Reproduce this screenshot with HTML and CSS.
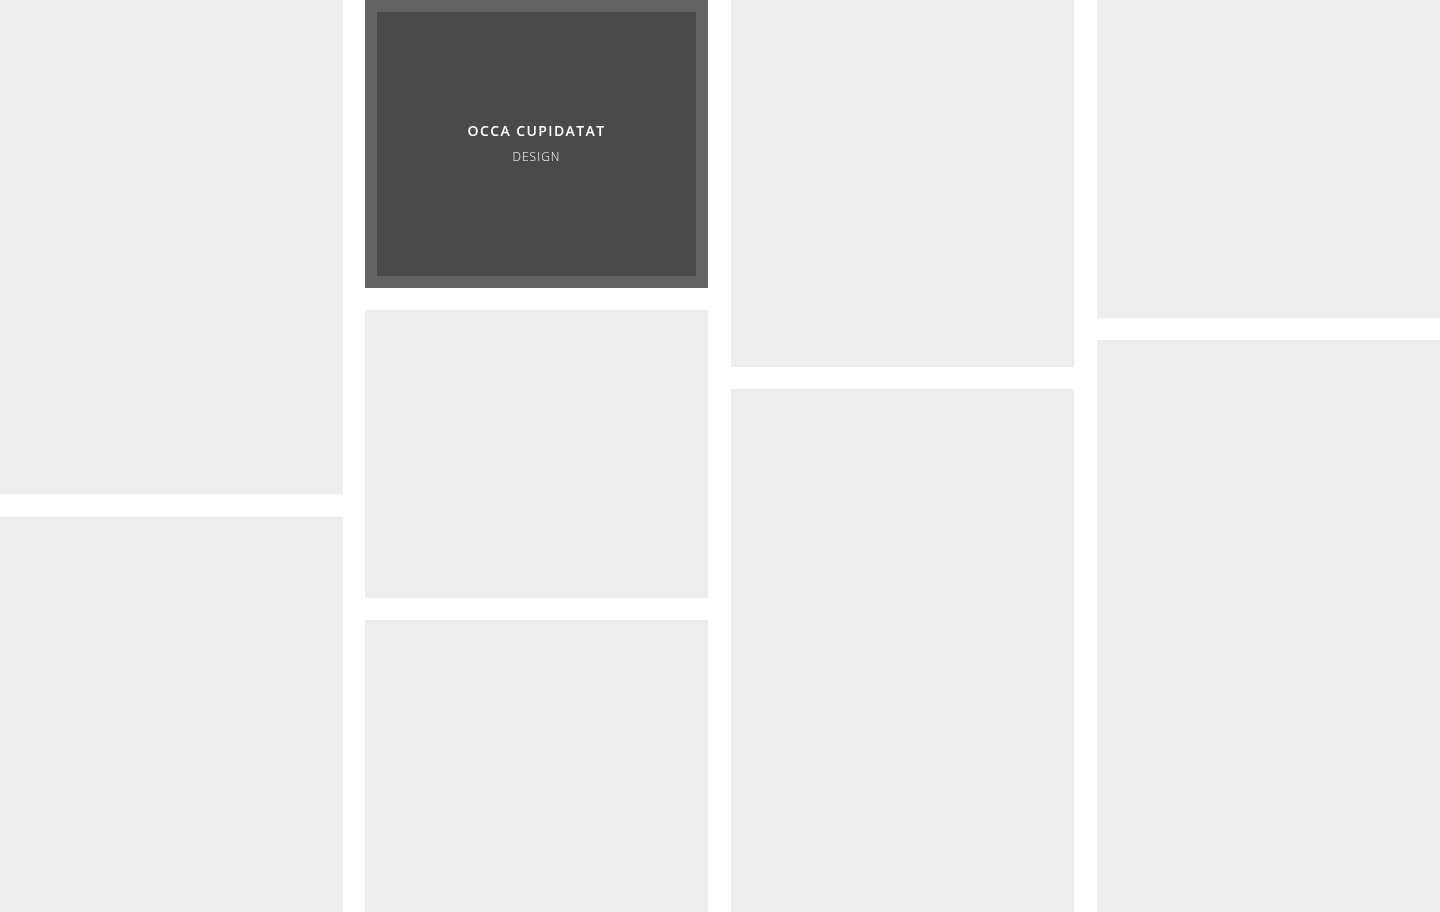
FILE: index.html
```html
<!DOCTYPE html>
<html lang="en">
<head>
<meta charset="utf-8">
<meta name="viewport" content="width=device-width, initial-scale=1">
<title>Portfolio</title>
<link rel="stylesheet" href="styles.css">
</head>
<body>
<main class="gallery">
  <div class="column">
    <article class="tile tile-tall"></article>
    <article class="tile tile-rest"></article>
  </div>
  <div class="column">
    <article class="tile tile-short tile-active">
      <div class="caption">
        <h2 class="caption-title">Occa cupidatat</h2>
        <p class="caption-category">Design</p>
      </div>
    </article>
    <article class="tile tile-short"></article>
    <article class="tile tile-rest"></article>
  </div>
  <div class="column">
    <article class="tile tile-medium"></article>
    <article class="tile tile-rest"></article>
  </div>
  <div class="column">
    <article class="tile tile-square"></article>
    <article class="tile tile-rest"></article>
  </div>
</main>
</body>
</html>
```

FILE: styles.css
```css
* {
  box-sizing: border-box;
}

body {
  margin: 0;
  background: #fff;
  font-family: "Open Sans", sans-serif;
}

.gallery {
  display: grid;
  grid-template-columns: 1fr 22px 1fr 23px 1fr 23px 1fr;
  min-height: 100vh;
}

.column {
  display: flex;
  flex-direction: column;
  gap: 22px;
}

.column:nth-child(1) { grid-column: 1; grid-row: 1; gap: 23px; }
.column:nth-child(2) { grid-column: 3; grid-row: 1; }
.column:nth-child(3) { grid-column: 5; grid-row: 1; }
.column:nth-child(4) { grid-column: 7; grid-row: 1; }

.tile {
  background: #ededed;
}

.tile-tall { aspect-ratio: 343 / 494; }
.tile-short { aspect-ratio: 343 / 288; }
.tile-medium { aspect-ratio: 343 / 367; }
.tile-square { aspect-ratio: 343 / 318; }
.tile-rest { flex: 1; }

.tile-active {
  display: flex;
  padding: 12px;
  background: #666462;
}

.caption {
  flex: 1;
  display: flex;
  flex-direction: column;
  align-items: center;
  justify-content: center;
  gap: 2px;
  background: #4c4a48;
  color: #fff;
  text-align: center;
  text-transform: uppercase;
}

.caption-title,
.caption-category {
  margin: 0;
  line-height: 24px;
  will-change: opacity;
}

.caption-title {
  font-size: 14px;
  font-weight: 600;
  letter-spacing: 0.1em;
}

.caption-category {
  font-size: 12px;
  font-weight: 300;
  letter-spacing: 1px;
}
```
